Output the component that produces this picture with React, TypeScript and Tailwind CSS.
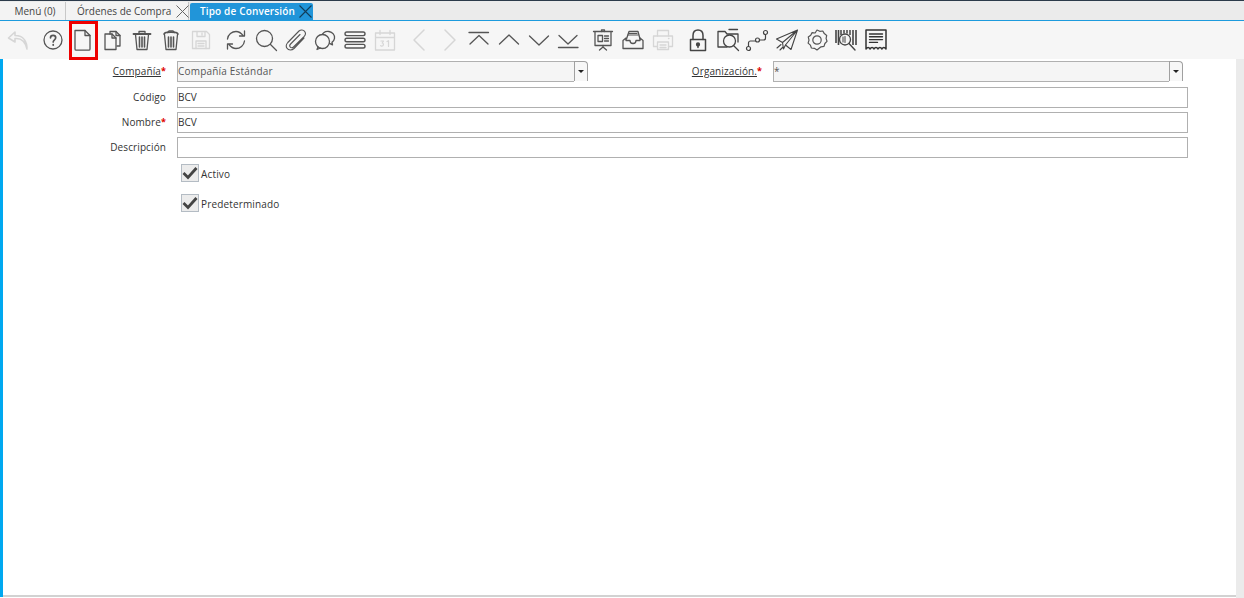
import React from "react";

const S = ({ c = "#555555", w = 1.3, children }: { c?: string; w?: number; children: React.ReactNode }) => (
  <svg width="24" height="24" viewBox="0 0 24 24" fill="none" stroke={c} strokeWidth={w} strokeLinecap="round" strokeLinejoin="round">
    {children}
  </svg>
);

const D = "#d6d6d6";

const icons: Record<string, React.ReactNode> = {
  undo: <S c={D} w={1.6}><path d="M9 4 L2.5 10 L9 14 L9 10.5 C14 10 19 12 21 21 C21 14 18 7.5 9 7.5 Z" /></S>,
  help: <S><circle cx="12" cy="12" r="9" /><path d="M9.5 9.8c0-3.2 5.2-3.2 5.2 0 0 2-2.5 2-2.5 4.2" strokeWidth="1.7" /><path d="M12.2 16.7v.4" strokeWidth="1.8" /></S>,
  doc: <S><path d="M5 2.500h10l5 5v13.500a1.200 1.200 0 0 1-1.200 1.200H6.200A1.200 1.200 0 0 1 5 21Z" /><path d="M15 2.500v5h5" /></S>,
  copy: <S><path d="M10 6V3.500h6l4 4V18h-3" /><path d="M16 3.500v4h4" /><path d="M5 6h7l4 4v11.500H5Z" /><path d="M12 6v4h4" /></S>,
  trash: <S><path d="M3.500 6h17" strokeWidth="1.800" /><path d="M9 5.500V3.500h6v2" /><path d="M5.500 6.500 7 21.500h10l1.500-15" /><path d="M9.500 9v10M12 9v10M14.500 9v10" strokeWidth="1.600" /></S>,
  trash2: <S><path d="M5 6c1-2.500 13-2.500 14 0" strokeWidth="1.600" /><path d="M8.500 4.500 10 3h4l1.500 1.500" /><path d="M5.500 6.500 7 21.500h10l1.500-15" /><path d="M9.500 9v10M12 9v10M14.500 9v10" strokeWidth="1.600" /></S>,
  save: <S c={D}><path d="M3.500 3.500h14l3 3v14h-17Z" /><path d="M8 3.500v5h8v-5M13 5v2" /><path d="M7 20.500V13h10v7.500M9 15.500h6M9 18h6" /></S>,
  refresh: <S><path d="M3.500 11C4 6.500 8 3.500 12 3.500c3.500 0 5.500 2 7 4" /><path d="M20.500 3v5h-5" /><path d="M20.500 13c-.5 4.500-4.500 7.500-8.500 7.500-3.500 0-5.500-2-7-4" /><path d="M3.500 21v-5h5" /></S>,
  search: <S><circle cx="10.500" cy="10.500" r="8" /><path d="m16.500 16.500 6 6" /></S>,
  clip: <S w={1.100}><path d="M20 10 10 20.500c-2 2-5.500 2.200-7-.2-1.200-1.800-.8-4 .8-5.800L15 3c1.700-1.600 4.300-1.300 5.600.3 1.200 1.500 1 3.500-.4 5L9.500 19c-1 1-2.400 1-3.200.2-.8-.9-.7-2.200.3-3.200L16 6.500" /></S>,
  chat: <S><path d="M9 7.500c1-3 4-4.500 7-4 3.500.6 6 3.500 5.500 6.800-.3 1.800-1.300 3-2.500 4l.5 2.500-3-1.500" /><circle cx="9.500" cy="13.500" r="7" fill="#f6f6f6" /><path d="M5 19l-1 2.500 3.500-1.500" /></S>,
  lines: <S w={1.400}><rect x="2" y="4" width="20" height="3.600" rx="1.800" /><rect x="2" y="10.200" width="20" height="3.600" rx="1.800" /><rect x="2" y="16.400" width="20" height="3.600" rx="1.800" /></S>,
  cal: <S c={D}><path d="M2.500 5h19v17h-19ZM2.500 9.500h19M7 2.500v4M17 2.500v4" /><path d="M8 13h2.500l-1.300 2c1.500 0 1.800 3-.2 3.200-.6 0-1-.2-1.300-.6M14 13.500l1.500-.8v5.800" strokeWidth="1.200" /></S>,
  left: <S c={D} w={1.500}><path d="M16 2 6 12l10 10" /></S>,
  right: <S c={D} w={1.500}><path d="m8 2 10 10L8 22" /></S>,
  first: <S><path d="M2 4.500h19.500" /><path d="M3 16 12 7.500 21 16" /></S>,
  up: <S><path d="m2.500 16 9.500-9 9.500 9" /></S>,
  down: <S><path d="m2.500 8 9.500 9 9.500-9" /></S>,
  last: <S><path d="m3 7.500 9 8.500 9-8.500" /><path d="M2.500 19.500h19.500" /></S>,
  present: <S w={1.300}><path d="M2.500 3.500h19M4 3.500v14h16v-14" /><path d="M7 7.500h4.500v6H7ZM13.500 8h4M13.500 10.500h4M13.500 13h4" /><path d="M12 17.500v1.500l-3.500 3M12 19l3.500 3" /><path d="M10.500 3.500V2h3v1.500" /></S>,
  inbox: <S><path d="M5.500 11 8 3.500h9L19 11" /><path d="M7 7h10M8 5.500h8" strokeWidth="1.100" /><path d="M2 12.500 5 10v2.500h4c0 2 1.300 3 3 3s3-1 3-3h4V10l3 2.500V20.500H2Z" /></S>,
  print: <S c={D}><path d="M6.500 8V2.500h11V8" /><path d="M6.500 18.500H2.500V8h19v10.500h-4" /><path d="M6.500 14h11v7.500h-11ZM9 17h6M9 19.500h6" /><path d="M17.500 10.500h.5" /></S>,
  lock: <S w={1.500} c="#444"><path d="M4.500 11.500h15v11h-15Z" /><path d="M7 11.500V7.500C7 4 9.200 2 12 2s5 2 5 5.500v4" /><circle cx="12" cy="16.500" r="1.400" fill="#444" /><path d="M12 17.500v2" /></S>,
  zoomdoc: <S w={1.300} c="#444"><path d="M2 3.500V19h9M2 3.500h7l2 2.500h11v8" /><path d="M13 1.500h8.500" /><circle cx="13.500" cy="13" r="6" /><path d="m18 18 4.500 4.500" /></S>,
  flow: <S w={1.200} c="#444"><circle cx="3.500" cy="20.500" r="2" /><path d="M3.500 18.500v-3.500a2 2 0 0 1 2-2H10" /><circle cx="12.500" cy="12" r="2" /><path d="M14.500 12h4a2 2 0 0 0 2-2V7" /><circle cx="20.500" cy="4.500" r="2" /></S>,
  send: <S w={1.100} c="#444"><path d="M22.500 2 1.500 11l6 3.500L22.500 2 10.500 17l5.500 4.500Z" /><path d="m7.500 14.500 1 6.500 2-4M2 20l4-3.500M5 22l3-3" /></S>,
  gear: <S w={1.200}><path d="m12 2 2.800 1.300 3-.3 1.500 2.600 2.400 1.800-.6 3 .9 2.900-2.100 2.200-.9 2.900-3 .4L12 22l-2.600-1.700-3-.3-1-2.900-2.300-2 .9-3-.7-3 2.400-1.800 1.400-2.700 3 .4Z" /><circle cx="12" cy="12" r="4.200" /></S>,
  barcode: <S w={1.300} c="#444"><path d="M2 2v13M4.500 2v15" strokeWidth="1.600" strokeLinecap="butt" /><path d="M7 2v5M10 2v3.500M13 2v3.500M16 2v5" strokeWidth="1.500" strokeLinecap="butt" /><path d="M19 2v15M22 2v15" strokeWidth="1.600" strokeLinecap="butt" /><circle cx="11" cy="11.500" r="5.500" fill="#f6f6f6" /><path d="m15 15.500 6 6.500" strokeWidth="1.400" /><path d="M9 9v5M11 8.500v6" strokeWidth="1" /></S>,
  receipt: <S c="#333" w={1.500}><path d="M2 2h20v19c-1.500-2-3-2-4 0-1.200-2-3-2-4 0-1-2-3-2-4 0-1-2-2.800-2-4 0-1-2-2.500-2-4 0Z" /><path d="M5.500 6h13M5.500 8.800h13M5.500 11.600h13M5.500 14.400h8" strokeWidth="1.400" /></S>,
};

const groups = [
  ["undo"],
  ["help", "doc", "copy", "trash", "trash2", "save"],
  ["refresh", "search", "clip", "chat", "lines", "cal"],
  ["left", "right", "first", "up", "down", "last"],
  ["present", "inbox", "print"],
  ["lock", "zoomdoc", "flow", "send", "gear", "barcode", "receipt"],
];

const Star = () => <span className="relative top-[-1px] text-[9px] font-bold text-[#e00000]">*</span>;

const Label = ({ text, req, link }: { text: string; req?: boolean; link?: boolean }) => (
  <div className="whitespace-nowrap pr-[11px] text-right text-[10px] leading-[14px] tracking-[0.1px] text-[#333]">
    <span className={link ? "underline" : ""}>{text}</span>
    {req && <Star />}
  </div>
);

const Combo = ({ value, className }: { value: string; className: string }) => (
  <div className={`flex h-[21px] ${className}`}>
    <div className="flex-1 border border-r-0 border-[#b0b0b0] bg-[#f5f5f5] text-[10px] leading-[18px] tracking-[0.2px] text-[#555]">{value}</div>
    <div className="flex h-[20px] w-[14px] items-center justify-center rounded-tr-sm border border-b-0 border-[#a0a0a0] bg-[#f7f7f7]">
      <div className="h-0 w-0 border-l-[3px] border-r-[3px] border-t-[3px] border-l-transparent border-r-transparent border-t-[#222]" />
    </div>
  </div>
);

const Input = ({ value }: { value?: string }) => (
  <div className="h-[21px] w-[1011px] border border-[#b0b0b0] bg-white text-[10px] leading-[19px] text-[#333]">{value}</div>
);

const Check = ({ text, className }: { text: string; className: string }) => (
  <div className={`flex items-center ${className}`}>
    <div className="flex h-[18px] w-[18px] items-center justify-center border border-[#b4bcc4] bg-[#ececec]">
      <svg width="16" height="14" viewBox="0 0 16 14" fill="none" stroke="#444" strokeWidth="2.800">
        <path d="m1.500 7 4.500 4.500L14.500 2" />
      </svg>
    </div>
    <span className="ml-[2px] pt-[2px] text-[10px] leading-[14px] tracking-[0.15px] text-[#333]">{text}</span>
  </div>
);

export default function App() {
  return (
    <div className="relative h-[598px] w-[1244px] overflow-hidden bg-white" style={{ fontFamily: '"Open Sans", "Noto Sans", sans-serif' }}>
      {/* Tab bar */}
      <div className="flex h-[21px] items-end border-b border-t border-b-[#1d9bdd] border-t-[#2b3a4a] bg-[#ebebeb]">
        <div className="flex h-[18px] w-[66px] items-center justify-center border-r border-[#c8c8c8] bg-[#f3f3f3] pl-[5px] text-[10px] text-[#444]">Menú (0)</div>
        <div className="flex h-[18px] w-[123px] items-center border-r border-[#c8c8c8] bg-[#f3f3f3] pl-[11px] text-[10px] text-[#444]">
          <span className="whitespace-nowrap">Órdenes de Compra</span>
          <svg className="ml-[5px] shrink-0" width="13" height="13" viewBox="0 0 13 13" stroke="#666" strokeWidth="1"><path d="m.5.500 12 12M12.500.500l-12 12" /></svg>
        </div>
        <div className="ml-px flex h-[17px] w-[123px] items-center rounded-t-[2px] bg-[#2195d9] pl-[10px] text-[10px] font-semibold tracking-[0.15px] text-white">
          <span className="whitespace-nowrap">Tipo de Conversión</span>
          <svg className="ml-[4px] shrink-0" width="13" height="13" viewBox="0 0 13 13" stroke="#123c58" strokeWidth="1.100"><path d="m.5.500 12 12M12.500.500l-12 12" /></svg>
        </div>
      </div>

      {/* Toolbar */}
      <div className="flex h-[38px] items-center bg-[#f6f6f6] pl-[3px]">
        {groups.map((g, i) => (
          <div key={i} className={`flex ${i === 0 ? "mr-[5px]" : "mr-[5.500px]"}`}>
            {g.map((n) => (
              <div key={n} className="flex h-[38px] w-[29.700px] items-center justify-center">
                {icons[n]}
              </div>
            ))}
          </div>
        ))}
      </div>

      {/* Window body */}
      <div className="flex h-[539px]">
        <div className="h-[538px] w-[3px] bg-[#00a8f0]" />
        <div className="h-[538px] flex-1 border-b-2 border-[#d2d2d2]">
          <div className="grid grid-cols-[174px_1fr] items-center pt-[2px]">
            <Label text="Compañía" req link />
            <div className="flex items-center">
              <Combo value="Compañía Estándar" className="w-[411px]" />
              <div className="w-[185px]"><Label text="Organización." req link /></div>
              <Combo value="*" className="w-[410px]" />
            </div>

            <div className="mt-[4px]"><Label text="Código" /></div>
            <div className="mt-[5px]"><Input value="BCV" /></div>
            <div className="mt-[3px]"><Label text="Nombre" req /></div>
            <div className="mt-[4px]"><Input value="BCV" /></div>
            <div className="mt-[3px]"><Label text="Descripción" /></div>
            <div className="mt-[4px]"><Input /></div>
            <div />
            <Check text="Activo" className="ml-[4px] mt-[6px]" />
            <div />
            <Check text="Predeterminado" className="ml-[4px] mt-[12px]" />
          </div>
        </div>
        <div className="w-[8px] bg-[#ebebeb]" />
      </div>

      {/* Red highlight annotation */}
      <div className="absolute left-[69px] top-[21px] h-[39px] w-[29px] border-[3px] border-[#ee0000]" />
    </div>
  );
}
